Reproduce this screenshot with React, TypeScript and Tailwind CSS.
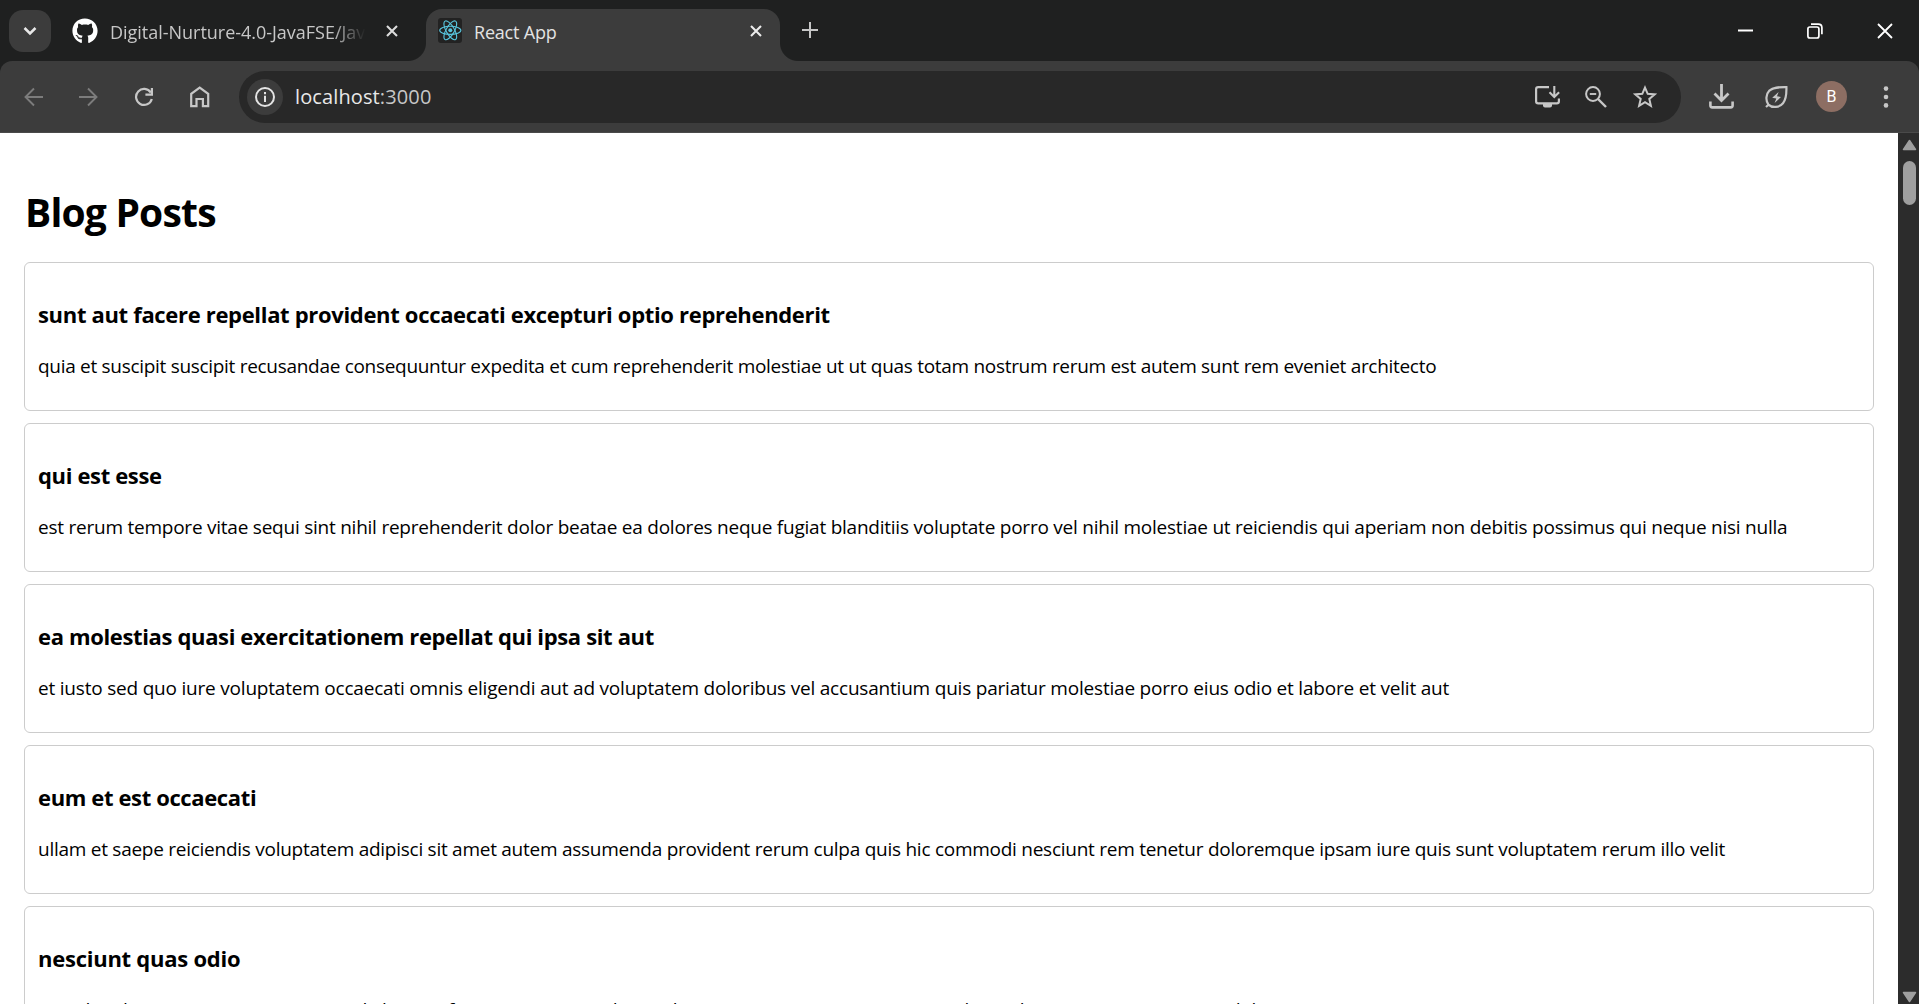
import type { ReactNode } from "react";
import { FaGithub } from "react-icons/fa";

type Post = {
  title: string;
  body: string;
  titleTracking: string;
  bodyTracking: string;
};

const posts: Post[] = [
  {
    title: "sunt aut facere repellat provident occaecati excepturi optio reprehenderit",
    body: "quia et suscipit suscipit recusandae consequuntur expedita et cum reprehenderit molestiae ut ut quas totam nostrum rerum est autem sunt rem eveniet architecto",
    titleTracking: "tracking-[-0.325px]",
    bodyTracking: "tracking-[-0.3px]",
  },
  {
    title: "qui est esse",
    body: "est rerum tempore vitae sequi sint nihil reprehenderit dolor beatae ea dolores neque fugiat blanditiis voluptate porro vel nihil molestiae ut reiciendis qui aperiam non debitis possimus qui neque nisi nulla",
    titleTracking: "tracking-[-0.35px]",
    bodyTracking: "tracking-[-0.236px]",
  },
  {
    title: "ea molestias quasi exercitationem repellat qui ipsa sit aut",
    body: "et iusto sed quo iure voluptatem occaecati omnis eligendi aut ad voluptatem doloribus vel accusantium quis pariatur molestiae porro eius odio et labore et velit aut",
    titleTracking: "tracking-[-0.355px]",
    bodyTracking: "tracking-[-0.204px]",
  },
  {
    title: "eum et est occaecati",
    body: "ullam et saepe reiciendis voluptatem adipisci sit amet autem assumenda provident rerum culpa quis hic commodi nesciunt rem tenetur doloremque ipsam iure quis sunt voluptatem rerum illo velit",
    titleTracking: "tracking-[-0.37px]",
    bodyTracking: "tracking-[-0.262px]",
  },
  {
    title: "nesciunt quas odio",
    body: "repudiandae veniam quaerat sunt sed alias aut fugiat sit autem sed est voluptatem omnis possimus esse voluptatibus quis est aut tenetur dolor neque",
    titleTracking: "tracking-[-0.25px]",
    bodyTracking: "tracking-[-0.25px]",
  },
];

type IconProps = { w: number; h: number; className?: string; children: ReactNode };

function Icon({ w, h, className = "", children }: IconProps) {
  return (
    <svg
      width={w}
      height={h}
      viewBox={`0 0 ${w} ${h}`}
      fill="none"
      stroke="currentColor"
      className={`block shrink-0 ${className}`}
    >
      {children}
    </svg>
  );
}

function CloseIcon({ className = "" }: { className?: string }) {
  return (
    <Icon w={12} h={12} className={className}>
      <path d="M1 1L11 11M11 1L1 11" strokeWidth="2.1" />
    </Icon>
  );
}

function ReactFavicon() {
  return (
    <Icon w={24} h={25} className="rounded-[3px] bg-[#222222] text-[#58c4dc]">
      <circle cx="12.3" cy="12.3" r="2" fill="currentColor" stroke="none" />
      <g strokeWidth="1.1">
        <ellipse cx="12.3" cy="12.3" rx="10.6" ry="4.1" />
        <ellipse cx="12.3" cy="12.3" rx="10.6" ry="4.1" transform="rotate(60 12.3 12.3)" />
        <ellipse cx="12.3" cy="12.3" rx="10.6" ry="4.1" transform="rotate(120 12.3 12.3)" />
      </g>
    </Icon>
  );
}

function TabStrip() {
  return (
    <div className="flex h-[61px] shrink-0 items-start">
      <div className="mt-[10px] ml-[9px] flex size-[42px] shrink-0 items-center justify-center rounded-[14px] bg-[#3c3c3c] text-[#e8e8e8]">
        <Icon w={14} h={10}>
          <path d="M1.5 2L7 7.5L12.5 2" strokeWidth="2.5" />
        </Icon>
      </div>

      <div className="mt-[9px] ml-[21px] flex h-[43px] w-[354px] shrink-0 items-center">
        <FaGithub className="size-[26px] shrink-0 text-white" />
        <div className="ml-[12px] w-[258px] shrink-0 overflow-hidden pt-[2px] [mask-image:linear-gradient(to_right,black_86%,transparent_99%)]">
          <span className="block text-[18px] leading-[26px] tracking-[-0.02px] whitespace-nowrap text-[#c7c7c7]">
            Digital-Nurture-4.0-JavaFSE/Jav
          </span>
        </div>
        <CloseIcon className="ml-[18px] text-[#dcdcdc]" />
      </div>

      <div className="relative mt-[9px] flex h-[52px] w-[354px] shrink-0 rounded-t-[16px] bg-[#3c3c3c] pb-[9px] pl-3">
        <div className="absolute bottom-0 -left-[18px] size-[18px] bg-[radial-gradient(circle_at_0_0,#1f2020_17.5px,#3c3c3c_18.5px)]" />
        <div className="absolute -right-[18px] bottom-0 size-[18px] bg-[radial-gradient(circle_at_100%_0,#1f2020_17.5px,#3c3c3c_18.5px)]" />
        <div className="flex w-full items-center">
          <ReactFavicon />
          <span className="ml-[12px] flex-1 pt-[2px] text-[18px] leading-[26px] tracking-[-0.2px] text-[#e3e3e3]">
            React App
          </span>
          <CloseIcon className="mr-[18px] text-[#ececec]" />
        </div>
      </div>

      <Icon w={16} h={16} className="mt-[22px] ml-[22px] text-[#c7c7c7]">
        <path d="M8 0V16M0 8H16" strokeWidth="2" />
      </Icon>

      <div className="ml-auto flex h-[61px] items-center gap-[54px] pr-[26px] text-white">
        <Icon w={15} h={16}>
          <path d="M0 7.5H15" strokeWidth="2" />
        </Icon>
        <Icon w={16} h={16}>
          <rect x="0.9" y="4" width="11" height="11" rx="2" strokeWidth="1.7" />
          <path d="M4 1.2H11.2C13.4 1.2 14.9 2.6 14.9 4.8V11.2" strokeWidth="1.7" />
        </Icon>
        <Icon w={16} h={16}>
          <path d="M1 1L15 15M15 1L1 15" strokeWidth="1.8" />
        </Icon>
      </div>
    </div>
  );
}

function Toolbar() {
  return (
    <div className="flex h-[72px] shrink-0 items-center rounded-t-[12px] border-b border-[#4a4a4a] bg-[#3c3c3c] text-[#c7c7c7]">
      <Icon w={20} h={20} className="ml-6 text-[#7c7c7c]">
        <path d="M19 10H2M10 1.5L1.5 10L10 18.5" strokeWidth="1.9" />
      </Icon>
      <Icon w={20} h={20} className="ml-[34px] text-[#7c7c7c]">
        <path d="M1 10H18M10 1.5L18.5 10L10 18.5" strokeWidth="1.9" />
      </Icon>
      <Icon w={20} h={20} className="ml-[36px]">
        <path d="M17.8 12A8 8 0 1 1 16.8 5.6" strokeWidth="2.2" />
        <path d="M17.9 1V7.6H11.4" strokeWidth="2.2" />
      </Icon>
      <Icon w={20} h={22} className="ml-[36px]">
        <path
          d="M1.2 20.2V7.8L9.7 1.5L18.2 7.8V20.2H12.9V13H6.5V20.2Z"
          strokeWidth="2.2"
        />
      </Icon>

      <div className="ml-[29px] flex h-[52px] w-[1442px] shrink-0 items-center rounded-full bg-[#282828]">
        <div className="ml-2 flex size-[36px] items-center justify-center rounded-full bg-[#3c3c3c] text-[#e3e3e3]">
          <Icon w={20} h={20}>
            <circle cx="10" cy="10" r="9" strokeWidth="2" />
            <path d="M10 8.8V15" strokeWidth="2" />
            <path d="M10 5V7.2" strokeWidth="2" />
          </Icon>
        </div>
        <span className="ml-[12px] text-[20px] leading-[28px] tracking-[0.12px] text-[#e8e8e8]">
          localhost<span className="text-[#c7c7c7]">:3000</span>
        </span>
        <div className="ml-auto flex items-center pr-[24px]">
          <Icon w={25} h={22}>
            <path
              d="M14 1.1H3.2Q1.1 1.1 1.1 3.2V15.2Q1.1 17.3 3.2 17.3H21.8Q23.9 17.3 23.9 15.2V12.5"
              strokeWidth="2.2"
            />
            <path d="M8 17H17V19.6Q17 21.6 15 21.6H10Q8 21.6 8 19.6Z" fill="currentColor" stroke="none" />
            <path d="M19.3 0V10.5M14.5 6.2L19.3 11L24.1 6.2" strokeWidth="2.1" />
          </Icon>
          <Icon w={22} h={22} className="ml-[25px]">
            <circle cx="8" cy="8" r="6.9" strokeWidth="2" />
            <path d="M13 13L21 21" strokeWidth="2.4" />
            <path d="M4.8 8H11.2" strokeWidth="1.9" />
          </Icon>
          <Icon w={24} h={23} className="ml-[26px]">
            <path
              d="M12 2.6L14.7 8.8L21.6 9.4L16.3 13.9L17.9 20.8L12 17.1L6.1 20.8L7.7 13.9L2.4 9.4L9.3 8.8Z"
              strokeWidth="2"
            />
          </Icon>
        </div>
      </div>

      <Icon w={26} h={26} className="ml-7">
        <path d="M12.5 0V16M5.5 9.5L12.5 16.5L19.5 9.5" strokeWidth="2.8" />
        <path d="M1.4 17.5V21.6Q1.4 23.4 3.2 23.4H21.8Q23.6 23.4 23.6 21.6V17.5" strokeWidth="2.6" />
      </Icon>
      <Icon w={24} h={24} className="ml-[30px]">
        <path
          d="M3.4 19.6C0.4 15.5 0.9 9.2 4.4 5.6C8 2.2 13.5 2 21.4 2.1C21.6 9 21.4 14.3 18 18.2C14.5 22.4 7.5 23.4 3.4 19.6ZM1 22L4 19.2"
          strokeWidth="2.2"
        />
        <path d="M13.6 6.9L7.2 12.7L11.3 13.6L9.6 18L16 12L12 11.2Z" fill="currentColor" stroke="none" />
      </Icon>
      <div className="ml-[27px] flex size-[31px] shrink-0 items-center justify-center rounded-full bg-[#8d6e63] pt-px font-[Roboto,sans-serif] text-[16px] leading-none text-white">
        B
      </div>
      <Icon w={6} h={22} className="ml-[36px]">
        <g fill="currentColor" stroke="none">
          <circle cx="3" cy="2.6" r="2.3" />
          <circle cx="3" cy="11" r="2.3" />
          <circle cx="3" cy="19.4" r="2.3" />
        </g>
      </Icon>
    </div>
  );
}

function PostCard({ post }: { post: Post }) {
  return (
    <article className="h-[149px] shrink-0 rounded-[6px] border border-[#cccccc] pt-[35px] pl-[13px] whitespace-nowrap">
      <h3 className={`text-[22px] leading-[32px] font-bold ${post.titleTracking}`}>{post.title}</h3>
      <p className={`mt-[22px] text-[19px] leading-[28px] ${post.bodyTracking}`}>{post.body}</p>
    </article>
  );
}

function Scrollbar() {
  return (
    <div className="flex w-[21px] shrink-0 flex-col items-center bg-[#2c2c2c] pl-px text-[#9f9f9f]">
      <Icon w={15} h={12} className="mt-[6px]">
        <path d="M7.5 1.5L13.5 10.5H1.5Z" fill="currentColor" strokeWidth="1.5" strokeLinejoin="round" />
      </Icon>
      <div className="mt-[10px] h-[44px] w-[13px] rounded-full bg-[#9f9f9f]" />
      <Icon w={15} h={12} className="mt-auto mb-px">
        <path d="M7.5 10.5L13.5 1.5H1.5Z" fill="currentColor" strokeWidth="1.5" strokeLinejoin="round" />
      </Icon>
    </div>
  );
}

export default function App() {
  return (
    <div className="flex h-[1004px] w-[1919px] flex-col overflow-hidden bg-[#1f2020] font-['Open_Sans','Noto_Sans',sans-serif]">
      <TabStrip />
      <Toolbar />
      <div className="flex min-h-0 flex-1 bg-white text-black">
        <main className="flex min-w-0 flex-1 flex-col overflow-hidden px-6 pt-[51px]">
          <h1 className="mb-[22px] shrink-0 pl-px text-[39px] leading-[56px] font-bold tracking-[-0.8px]">
            Blog Posts
          </h1>
          <div className="flex flex-col gap-3">
            {posts.map((post) => (
              <PostCard key={post.title} post={post} />
            ))}
          </div>
        </main>
        <Scrollbar />
      </div>
    </div>
  );
}
